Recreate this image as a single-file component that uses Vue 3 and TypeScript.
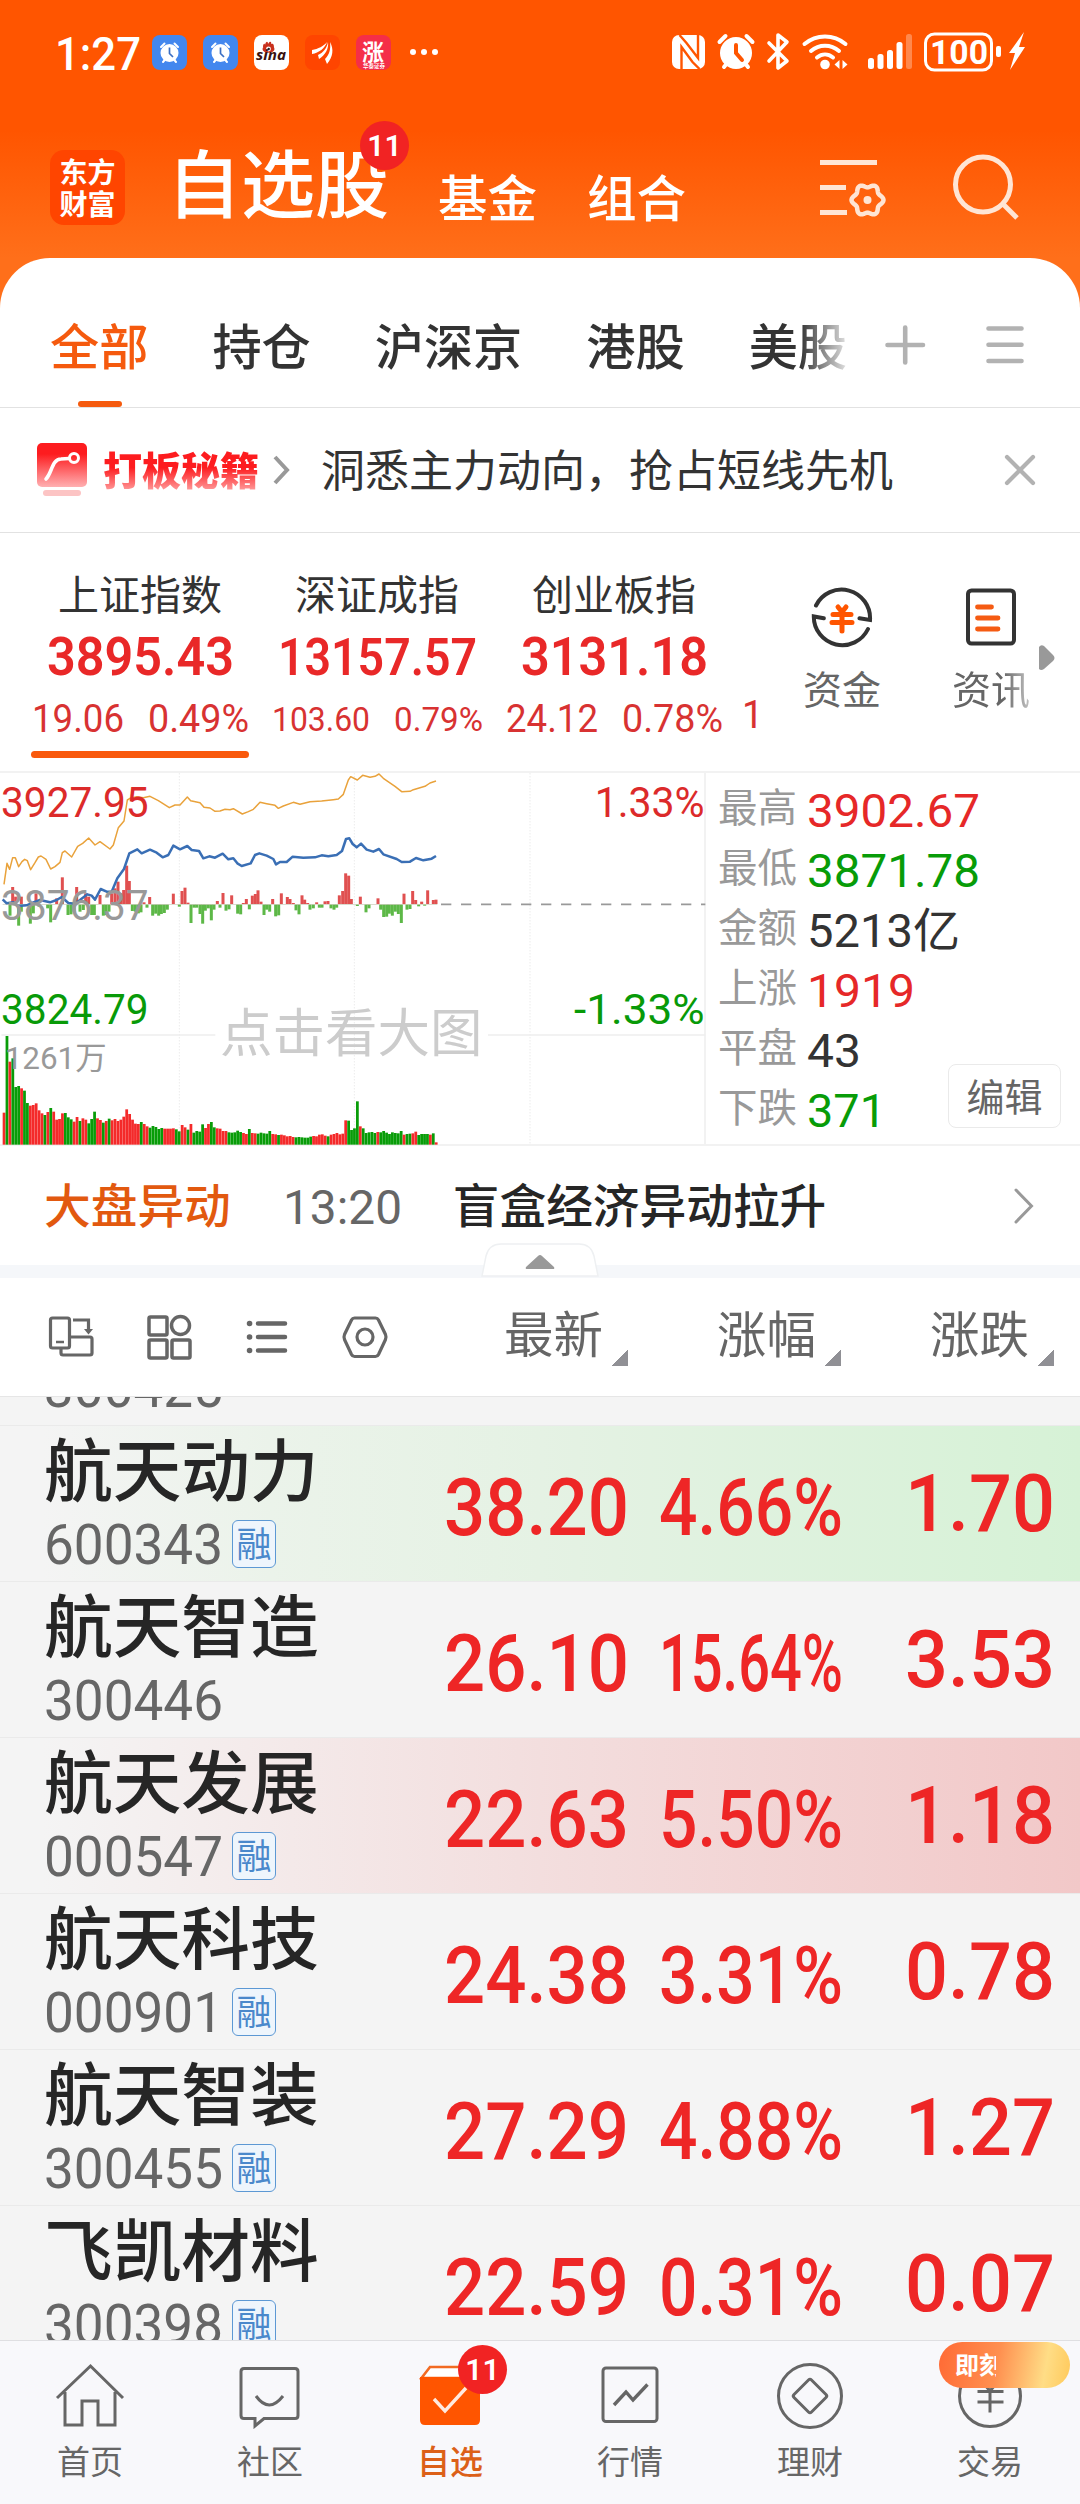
<script setup lang="ts">
type Tone = 'up' | 'down' | 'flat'

interface IndexQuote { name: string; value: string; change: string; pct: string; small?: boolean }
interface Stat { label: string; value: string; tone: Tone; width: number }
interface Stock { name: string; code: string; margin: boolean; price: string; pct: string; change: string; flash?: 'green' | 'red' }

// Sets figures in the numeric face and squeezes them to occupy exactly the given width.
const vFit = {
  mounted(el: HTMLElement, binding: { value: number }) {
    el.classList.add('fit')
    const natural = el.getBoundingClientRect().width
    if (!natural) return
    el.style.transformOrigin = 'left center'
    el.style.transform = `translateY(0.045em) scaleX(${binding.value / natural})`
    el.style.marginRight = `${binding.value - natural}px`
  },
}

const tabs = ['全部', '持仓', '沪深京', '港股', '美股']

const indexes: IndexQuote[] = [
  { name: '上证指数', value: '3895.43', change: '19.06', pct: '0.49%' },
  { name: '深证成指', value: '13157.57', change: '103.60', pct: '0.79%', small: true },
  { name: '创业板指', value: '3131.18', change: '24.12', pct: '0.78%' },
]

const stats: Stat[] = [
  { label: '最高', value: '3902.67', tone: 'up', width: 173 },
  { label: '最低', value: '3871.78', tone: 'down', width: 173 },
  { label: '金额', value: '5213亿', tone: 'flat', width: 153 },
  { label: '上涨', value: '1919', tone: 'up', width: 108 },
  { label: '平盘', value: '43', tone: 'flat', width: 54 },
  { label: '下跌', value: '371', tone: 'down', width: 79 },
]

const stocks: Stock[] = [
  { name: '航天动力', code: '600343', margin: true, price: '38.20', pct: '4.66%', change: '1.70', flash: 'green' },
  { name: '航天智造', code: '300446', margin: false, price: '26.10', pct: '15.64%', change: '3.53' },
  { name: '航天发展', code: '000547', margin: true, price: '22.63', pct: '5.50%', change: '1.18', flash: 'red' },
  { name: '航天科技', code: '000901', margin: true, price: '24.38', pct: '3.31%', change: '0.78' },
  { name: '航天智装', code: '300455', margin: true, price: '27.29', pct: '4.88%', change: '1.27' },
  { name: '飞凯材料', code: '300398', margin: true, price: '22.59', pct: '0.31%', change: '0.07' },
]

const columns = ['最新', '涨幅', '涨跌']

// Six-lobed gear outline.
const gear = Array.from({ length: 72 }, (_, i) => {
  const a = (i / 72) * Math.PI * 2
  const r = 14.3 + 1.7 * Math.cos(6 * a)
  return `${(867.5 + r * Math.cos(a)).toFixed(2)},${(200 + r * Math.sin(a)).toFixed(2)}`
}).join(' ')

// Chart geometry: three units per pixel.
const leadLine = '12,358 21,295 29,313 38,278 46,278 56,305 66,290 74,283 82,287 92,314 105,293 115,276 123,273 138,283 152,312 165,305 180,292 187,263 195,258 215,276 233,244 248,235 266,219 285,240 300,230 330,252 340,240 355,188 372,168 382,105 390,100 410,95 430,98 450,94 475,107 508,128 525,120 540,120 562,96 572,107 600,113 612,127 630,129 645,139 660,138 675,133 690,134 700,131 727,147 745,140 760,133 780,112 800,116 825,121 835,130 850,123 880,112 900,118 930,110 965,108 1000,104 1015,102 1030,88 1045,45 1052,35 1072,45 1088,31 1110,37 1125,34 1137,27 1150,40 1185,64 1205,80 1230,79 1240,74 1275,64 1290,54 1308,48'
const priceLine = '8,403 20,415 40,412 55,423 80,421 100,412 120,405 150,412 170,405 185,396 205,414 225,416 240,405 262,388 275,392 285,404 302,372 320,380 335,380 352,340 372,312 388,265 412,253 425,265 450,254 470,263 488,277 505,270 520,242 540,253 562,243 575,255 597,258 610,280 628,274 645,278 668,266 685,283 700,280 712,295 725,303 752,295 765,270 778,265 800,272 820,282 828,298 840,291 860,291 878,275 910,278 945,277 965,271 985,274 1010,270 1026,258 1038,222 1048,220 1058,237 1070,247 1083,236 1100,254 1120,260 1137,252 1150,268 1190,282 1205,291 1230,290 1248,279 1270,286 1295,281 1308,273'

const strengthUp: number[][] = [[38, 366], [47, 395], [64, 395], [108, 385], [170, 400], [187, 337], [230, 366], [257, 385], [266, 395], [300, 390], [335, 385], [345, 370], [354, 350], [362, 385], [371, 375], [380, 302], [388, 348], [432, 412], [449, 396], [520, 386], [546, 378], [555, 368], [564, 413], [652, 408], [669, 384], [695, 391], [730, 414], [739, 402], [757, 392], [766, 387], [774, 376], [783, 410], [818, 402], [844, 385], [862, 396], [870, 402], [880, 414], [906, 391], [914, 404], [923, 414], [950, 412], [975, 409], [984, 408], [1018, 391], [1028, 378], [1037, 325], [1046, 332], [1054, 402], [1081, 395], [1134, 400], [1212, 386], [1238, 378], [1247, 405], [1265, 410], [1283, 376], [1300, 405], [1308, 404]]
const strengthDown: number[][] = [[30, 452], [56, 482], [64, 440], [91, 476], [100, 445], [117, 425], [143, 430], [152, 472], [204, 450], [213, 448], [222, 440], [240, 440], [250, 435], [275, 450], [283, 450], [310, 452], [318, 450], [327, 440], [397, 438], [406, 440], [415, 445], [423, 442], [441, 428], [458, 452], [467, 446], [476, 452], [484, 447], [493, 444], [502, 434], [538, 425], [573, 474], [582, 428], [590, 428], [600, 447], [608, 476], [616, 437], [625, 430], [634, 466], [642, 434], [660, 428], [678, 437], [687, 433], [713, 446], [722, 448], [748, 433], [792, 450], [800, 434], [809, 440], [827, 454], [836, 451], [888, 436], [897, 448], [930, 434], [940, 430], [958, 428], [966, 428], [993, 430], [1002, 434], [1010, 428], [1072, 423], [1098, 442], [1107, 430], [1142, 434], [1151, 456], [1160, 455], [1168, 446], [1177, 452], [1186, 440], [1195, 447], [1204, 474], [1221, 434], [1230, 432], [1256, 424], [1274, 422]]

const volumeTops: number[] = [
  1043, 813, 890, 880, 966, 963, 970, 977, 1014, 1022, 1020, 1015, 1036, 1045, 1050, 1041, 1029, 1040, 1064, 1062,
  1045, 1044, 1057, 1063, 1070, 1056, 1068, 1060, 1064, 1075, 1062, 1040, 1060, 1065, 1073, 1068, 1061, 1066, 1062, 1068,
  1064, 1055, 1033, 1047, 1064, 1076, 1077, 1071, 1077, 1084, 1088, 1083, 1086, 1092, 1089, 1091, 1091, 1091, 1090, 1093,
  1099, 1080, 1087, 1094, 1077, 1103, 1098, 1100, 1078, 1089, 1077, 1071, 1087, 1090, 1091, 1098, 1098, 1102, 1103, 1102,
  1097, 1101, 1104, 1107, 1092, 1104, 1105, 1106, 1103, 1105, 1106, 1098, 1107, 1108, 1110, 1109, 1111, 1114, 1113, 1116,
  1117, 1116, 1117, 1118, 1118, 1115, 1113, 1114, 1109, 1108, 1112, 1114, 1109, 1107, 1104, 1108, 1106, 1066, 1067, 1095,
  1090, 1009, 1084, 1090, 1104, 1102, 1101, 1104, 1101, 1102, 1098, 1103, 1107, 1102, 1104, 1105, 1098, 1109, 1107, 1106,
  1105, 1100, 1110, 1107, 1107, 1107, 1109, 1105, 1132,
]
const volumeTones =
  'rgrgggrggrrrrrgrgrrrrgggrrgrrggg' + 'rrgrgrrrrrrrrrrgrrggggg' + 'rrrrggrrgrggggrrggrrrrgggggrrgrrg' + 'ggggrrgrrrrrggggggrrrrrgrrrr' + 'rrggggrgggggrggggggggrggrrggggrgrr'

const bottomBars = volumeTops.map((top, i) => ({ x: 8 + i * 8.76, top, tone: volumeTones[i] === 'g' ? 'green' : 'red' }))
</script>

<template>
  <div class="app">
    <header class="head">
      <div class="status">
        <span class="clock" v-fit="86">1:27</span>
        <div class="notif">
          <svg v-for="n in 2" :key="n" width="35" height="35" viewBox="0 0 35 35">
            <rect width="35" height="35" rx="8" fill="#4387ee" />
            <circle cx="17.5" cy="18" r="9" fill="#fff" />
            <path d="M9 12l3.5-3.5M26 12l-3.5-3.5M11 27l2.500-3M24 27l-2.500-3" stroke="#fff" stroke-width="2" stroke-linecap="round" />
            <path d="M17.500 12.500v6l3.500 3.500" stroke="#3b6fc4" stroke-width="1.700" fill="none" />
          </svg>
          <svg width="35" height="35" viewBox="0 0 35 35">
            <rect width="35" height="35" rx="8" fill="#fff" />
            <ellipse cx="14.500" cy="14" rx="6" ry="3.800" fill="#c9301c" />
            <path d="M9 12c0-4 2-4 2-2 1-4 3-4 3-1 2-4 4-2 3 0 3-1 3 2 3 4z" fill="#c9301c" />
            <circle cx="14.500" cy="14" r="2.400" fill="#fff" /><circle cx="14.700" cy="14" r="1.200" fill="#222" />
            <text x="2" y="25" textLength="30" lengthAdjust="spacingAndGlyphs" font-size="14" font-weight="700" font-style="italic" fill="#3a1210">sina</text>
          </svg>
          <svg width="35" height="35" viewBox="0 0 35 35">
            <rect width="35" height="35" rx="8" fill="#ff4500" />
            <path d="M7 15c6-1 12-4 15-8-2 6-8 11-15 12zM13 20c5-2 9-7 10-13 1 7-3 13-9 17zM20 24c4-4 6-9 5-17 4 7 3 15-3 22z" fill="#fff" />
          </svg>
          <svg width="35" height="35" viewBox="0 0 35 35">
            <rect width="35" height="35" rx="8" fill="#f52e48" />
            <text x="6" y="25" font-size="22" font-weight="700" fill="#fff">涨</text>
            <text x="7" y="33" font-size="5.500" font-weight="700" fill="#fff">华泰证券</text>
          </svg>
        </div>
        <span class="dots"><i></i><i></i><i></i></span>
        <svg class="sys" width="356" height="42" viewBox="670 31 356 42" fill="#fff">
          <rect x="672" y="35" width="33" height="34" rx="7" />
          <path d="M679.500 35l7 8 11.500 15V35M699.500 69l-7-7-11-15v22" stroke="#ff5500" stroke-width="2.400" fill="none" />
          <circle cx="736" cy="53" r="16" />
          <path d="M719.500 42l6-6M752.500 42l-6-6M724 67l4-5M748 67l-4-5" stroke="#fff" stroke-width="4" stroke-linecap="round" />
          <path d="M736 45v8l6 7" stroke="#ff5500" stroke-width="4" fill="none" stroke-linecap="round" />
          <path d="M769 43l18 18-9 7V35l9 7-18 19" fill="none" stroke="#fff" stroke-width="3.600" stroke-linejoin="round" stroke-linecap="round" />
          <g fill="none" stroke="#fff" stroke-width="4" stroke-linecap="round">
            <path d="M804.500 44c12-10 29-10 41 0M811 51c8-7 20-7 28 0M817 57.500c5-4 11-4 16 0" />
          </g>
          <circle cx="825" cy="64.500" r="4.800" />
          <path d="M839.500 60v9l-5-4.500zM842.500 60v9l5-4.500z" />
          <rect x="868" y="58" width="6" height="11" rx="2.500" /><rect x="877.500" y="54" width="6" height="15" rx="2.500" />
          <rect x="887" y="50" width="6" height="19" rx="2.500" /><rect x="896.500" y="42" width="6" height="27" rx="2.500" />
          <rect x="906" y="34" width="6" height="35" rx="2.500" opacity=".3" />
          <rect x="925.500" y="34" width="66" height="36" rx="9" fill="none" stroke="#fff" stroke-width="3" />
          <text class="fit" x="930" y="64" textLength="58" lengthAdjust="spacingAndGlyphs" font-size="34" font-weight="700">100</text>
          <rect x="996" y="46" width="5" height="11" rx="2" />
          <path d="M1024 32l-15 21h6l-5 17 15-23h-6z" />
        </svg>
      </div>
      <div class="nav">
        <div class="logo"><span>东方</span><span>财富</span></div>
        <span class="main-title">自选股<b class="badge"><span>11</span></b></span>
        <span class="sub first">基金</span>
        <span class="sub">组合</span>
        <svg class="tools" width="204" height="70" viewBox="818 152 204 70" fill="none" stroke="#ffe5d4" stroke-width="5">
          <path d="M820 162.500h57M820 187.500h26M820 212.500h27" />
          <polygon :points="gear" stroke-width="4.500" stroke-linejoin="round" />
          <circle cx="867.500" cy="200" r="4" fill="#ffe5d4" stroke="none" />
          <circle cx="983" cy="184.500" r="27.500" />
          <path d="M1003 204l14 14" />
        </svg>
      </div>
    </header>

    <main class="sheet">
      <div class="tabs">
        <div class="tab-list">
          <span v-for="(t, i) in tabs" :key="t" class="tab" :class="{ active: i === 0 }">{{ t }}</span>
        </div>
        <svg class="tab-tools" width="142" height="44" viewBox="884 323 142 44" fill="none" stroke="#b2b2b2" stroke-width="4.600" stroke-linecap="round">
          <path d="M887.500 345h35.500M905.200 327.500v35M988.500 328.500h33M988.500 344.800h33M988.500 361h33" />
        </svg>
      </div>

      <div class="promo">
        <svg width="50" height="54" viewBox="0 0 50 54">
          <defs>
            <linearGradient id="pg" x1="0" y1="0" x2="0" y2="1"><stop offset=".25" stop-color="#fd1c1f" /><stop offset="1" stop-color="#ffb0b2" /></linearGradient>
          </defs>
          <rect width="50" height="44" rx="5" fill="url(#pg)" />
          <rect x="6" y="47" width="38" height="6" rx="3" fill="#fcc4c4" />
          <path d="M9 36c6-6 6-20 15-20l8-.500" fill="none" stroke="#fff" stroke-width="3.600" stroke-linecap="round" />
          <circle cx="37" cy="15" r="4.500" fill="none" stroke="#fff" stroke-width="3" />
        </svg>
        <b class="promo-name">打板秘籍</b>
        <svg class="chev" width="17" height="30" viewBox="0 0 17 30" fill="none" stroke="#999" stroke-width="4"><path d="M2 2l12 13L2 28" /></svg>
        <span class="promo-text">洞悉主力动向，抢占短线先机</span>
        <svg class="close" width="32" height="32" viewBox="0 0 32 32" fill="none" stroke="#b2b2b2" stroke-width="4.200" stroke-linecap="round"><path d="M3 3l26 26M29 3L3 29" /></svg>
      </div>

      <div class="indexes">
        <div v-for="(q, i) in indexes" :key="q.name" class="index" :class="{ active: i === 0, small: q.small }">
          <span class="index-name">{{ q.name }}</span>
          <b class="index-value"><span v-fit="q.small ? 199 : 187">{{ q.value }}</span></b>
          <span class="index-delta">
            <span v-fit="q.small ? 98 : 92">{{ q.change }}</span>
            <span v-fit="q.small ? 89 : 101">{{ q.pct }}</span>
          </span>
        </div>
        <span class="next-index fit">1</span>
        <div class="entry">
          <svg width="62" height="62" viewBox="0 0 62 62" fill="none" stroke-linecap="round">
            <g stroke="#333" stroke-width="4">
              <path d="M5 19.500A28.500 28.500 0 0 1 59 34l-10.500-1.800" /><path d="M57 43A28.500 28.500 0 0 1 2.800 30.500l10 1.800" />
            </g>
            <path d="M27 21l4 5 4-5M22 28.500h18M21 36.500h20M31 28v17" stroke="#ff5500" stroke-width="5" />
          </svg>
          <span>资金</span>
        </div>
        <div class="entry news">
          <svg width="62" height="62" viewBox="0 0 62 62" fill="none" stroke-linecap="round">
            <rect x="8" y="4.500" width="46" height="53" rx="3.500" stroke="#333" stroke-width="4" />
            <path d="M17.500 21h14M17.500 32h20.500M17.500 43h20.500" stroke="#f55b12" stroke-width="4.800" />
          </svg>
          <span>资讯</span>
        </div>
        <svg class="more" width="16" height="26" viewBox="0 0 16 26"><path d="M0 2Q2-1 5 1l9 9q3 3 0 6l-9 8q-3 2-5 0z" fill="#999" /></svg>
      </div>

      <div class="market">
        <div class="chart">
          <svg width="706" height="375" viewBox="0 18 2118 1125">
            <g stroke="#e2e2e2" stroke-width="3" stroke-dasharray="3 6"><path d="M538 25V1137M1063 25V1137M1590 25V1137" /></g>
            <path d="M4 810H646M1464 810H2116" stroke="#eee" stroke-width="5" />
            <g fill="#e05050"><rect v-for="p in strengthUp" :key="p[0]" :x="p[0] - 4.500" :y="p[1]" width="9" :height="417 - p[1]" /></g>
            <g fill="#5db847"><rect v-for="p in strengthDown" :key="p[0]" :x="p[0] - 4.500" y="419" width="9" :height="p[1] - 419" /></g>
            <path d="M8 418H1312" stroke="#8a8a60" stroke-width="2" opacity=".55" />
            <path d="M1323 418H2116" stroke="#999" stroke-width="5" stroke-dasharray="31 29" />
            <polyline :points="leadLine" fill="none" stroke="#e9a23b" stroke-width="4.500" stroke-linejoin="round" />
            <polyline :points="priceLine" fill="none" stroke="#3a6fb5" stroke-width="7.500" stroke-linejoin="round" />
            <rect v-for="b in bottomBars" :key="b.x" :x="b.x" :y="b.top" width="8.300" :height="1139 - b.top" :fill="b.tone === 'green' ? '#089c08' : '#f42a2a'" />
            <g class="axis">
              <text x="3" y="157" textLength="443" lengthAdjust="spacingAndGlyphs" class="t-up">3927.95</text>
              <text x="3" y="466" textLength="443" lengthAdjust="spacingAndGlyphs" class="t-grey">3876.37</text>
              <text x="3" y="777" textLength="443" lengthAdjust="spacingAndGlyphs" class="t-down">3824.79</text>
              <text x="1784" y="157" textLength="330" lengthAdjust="spacingAndGlyphs" class="t-up">1.33%</text>
              <text x="1722" y="777" textLength="392" lengthAdjust="spacingAndGlyphs" class="t-down">-1.33%</text>
              <text x="14" y="912" textLength="306" lengthAdjust="spacingAndGlyphs" class="t-vol">1261万</text>
            </g>
          </svg>
          <span class="watermark">点击看大图</span>
        </div>
        <div class="stats">
          <div v-for="s in stats" :key="s.label" class="stat">
            <span class="stat-label">{{ s.label }}</span>
            <span class="stat-value" :class="s.tone" v-fit="s.width">{{ s.value }}</span>
          </div>
          <button class="edit" type="button">编辑</button>
        </div>
      </div>

      <div class="alert">
        <span class="alert-kind">大盘异动</span>
        <span class="alert-time" v-fit="119">13:20</span>
        <span class="alert-text">盲盒经济异动拉升</span>
        <svg width="20" height="36" viewBox="0 0 20 36" fill="none" stroke="#999" stroke-width="3" stroke-linecap="round"><path d="M2 2l15.500 16L2 34" /></svg>
      </div>
      <div class="divider">
        <svg class="fold" width="120" height="36" viewBox="0 0 120 36">
          <path d="M2 34L6 14Q9 2 21 2H99Q111 2 114 14L118 34z" fill="#fff" stroke="#eef0f2" stroke-width="1.500" />
          <path d="M46 25L58 14q2-2 4 0l12 11q1 2-1 2H47q-2 0-1-2z" fill="#999" />
        </svg>
      </div>

      <div class="toolbar">
        <svg width="342" height="46" viewBox="47 1314 342 46" fill="none" stroke="#666" stroke-width="3.200">
          <rect x="50.500" y="1318" width="19" height="30" rx="2" /><path d="M56 1342h8" stroke-width="2.500" />
          <path d="M61 1349v4q0 2 2 2h27q2 0 2-2v-14q0-2-2-2H70M73 1320h15.500v12" /><path d="M84 1329l4.500 5.500 4.500-5.500z" fill="#666" stroke="none" />
          <g stroke-width="3.500"><rect x="149" y="1317" width="18" height="18" rx="1.500" /><circle cx="180.500" cy="1325.500" r="9" /><rect x="149" y="1340" width="18" height="18" rx="1.500" /><rect x="172" y="1340" width="18" height="18" rx="1.500" /></g>
          <path d="M258 1323.500h27M258 1337h27M258 1350.500h27" stroke-width="4.500" stroke-linecap="round" />
          <path d="M249.500 1323.500h.100M249.500 1337h.100M249.500 1350.500h.100" stroke-width="5.500" stroke-linecap="round" />
          <path d="M354.500 1318h21q2 0 3 2l7 14.500q1 2.500 0 5l-7 15q-1 2-3 2h-21q-2 0-3-2l-7-15q-1-2.500 0-5l7-14.500q1-2 3-2z" /><circle cx="365" cy="1337" r="8" />
        </svg>
        <span v-for="c in columns" :key="c" class="col-head">{{ c }}<i></i></span>
      </div>

      <div class="list">
        <div class="stock partial"><span class="code"><span v-fit="179">300425</span></span></div>
        <div v-for="s in stocks" :key="s.code" class="stock" :class="s.flash">
          <div class="who">
            <span class="stock-name">{{ s.name }}</span>
            <span class="code"><span v-fit="179">{{ s.code }}</span><em v-if="s.margin">融</em></span>
          </div>
          <span class="num price"><span v-fit="185">{{ s.price }}</span></span>
          <span class="num pct"><span v-fit="184">{{ s.pct }}</span></span>
          <span class="num diff"><span v-fit="150">{{ s.change }}</span></span>
        </div>
      </div>
    </main>

    <nav class="bottom">
      <div class="item">
        <svg width="72" height="66" viewBox="54 2364 72 66" class="ic"><path d="M57 2399l33.500-32 32.500 32M65 2393v33h17v-24h16v24h17v-33" /></svg>
        <span>首页</span>
      </div>
      <div class="item">
        <svg width="72" height="66" viewBox="234 2364 72 66" class="ic"><path d="M244 2369.500h51q3 0 3 3v44q0 3-3 3h-31l-9 7.500v-7.500h-11q-3 0-3-3v-44q0-3 3-3zM256 2397q13 18 27 0" /></svg>
        <span>社区</span>
      </div>
      <div class="item on">
        <svg width="72" height="66" viewBox="414 2364 72 66"><path d="M421.500 2379l8.500-11h42l7 11z" fill="#fff" stroke="#f26a22" stroke-width="2.600" /><path d="M420 2378h60v43q0 5-5 5h-50q-5 0-5-5z" fill="#ff5500" /><path d="M434 2400l11 12 21-23" fill="none" stroke="#ffeadf" stroke-width="3.400" /></svg>
        <b class="badge"><span>11</span></b>
        <span>自选</span>
      </div>
      <div class="item">
        <svg width="72" height="66" viewBox="594 2364 72 66" class="ic"><rect x="603" y="2369" width="54" height="53.500" rx="3" /><path d="M614 2406l12-13 7 8 14.500-15.500" stroke-width="3.400" /></svg>
        <span>行情</span>
      </div>
      <div class="item">
        <svg width="72" height="66" viewBox="774 2364 72 66" class="ic"><circle cx="810" cy="2397" r="31.500" /><path d="M808.500 2381q1.500-1.500 3 0l14.500 14.500q1.500 1.500 0 3L811.500 2413q-1.500 1.500-3 0L794 2398.500q-1.500-1.500 0-3z" /></svg>
        <span>理财</span>
      </div>
      <div class="item">
        <svg width="72" height="66" viewBox="953.500 2364 72 66" class="ic"><circle cx="989.500" cy="2397" r="30.500" /><path d="M983 2384l6.500 8 6.500-8M977 2392.500h26M977 2403h26M989.500 2392v21.500" /></svg>
        <span class="promo-pill"><span>即刻</span></span>
        <span>交易</span>
      </div>
    </nav>
  </div>
</template>

<style>
body { margin: 0; background: #f4f4f4; }
</style>

<style scoped>
.app {
  width: 1080px; height: 2504px; display: flex; flex-direction: column; overflow: hidden;
  font-family: "Noto Sans", "Noto Sans CJK SC", sans-serif; color: #333; line-height: 1; white-space: nowrap;
  background: #ff6f1a;
}
.fit { font-family: Roboto, "Noto Sans CJK SC", sans-serif; }
svg { display: block; flex: none; }
span, b { flex: none; }
.head { height: 258px; flex: none; background: linear-gradient(#ff5500 130px, #ff6f1a 258px); color: #fff; }
.status { height: 104px; display: flex; align-items: center; padding: 0 54px 0 55px; box-sizing: border-box; }
.clock { font-size: 46px; font-weight: 500; display: inline-block; }
.notif { display: flex; gap: 16px; margin-left: 11px; }
.dots { display: flex; gap: 5px; margin-left: 19px; }
.dots i { width: 6px; height: 6px; border-radius: 50%; background: #fff; }
.sys { margin-left: auto; }
.nav { height: 154px; display: flex; align-items: flex-start; padding-left: 50px; }
.logo {
  width: 75px; height: 75px; margin-top: 46px; border-radius: 14px; background: #ff4500; box-sizing: border-box;
  display: flex; flex-direction: column; align-items: center; justify-content: center; gap: 4px; font-size: 28px; font-weight: 700;
}
.main-title { position: relative; font-size: 74px; font-weight: 500; margin: 43px 0 0 42px; }
.badge {
  position: absolute; width: 49px; height: 49px; border-radius: 50%; background: #f12323; color: #fff;
  display: flex; align-items: center; justify-content: center; font: 600 30px/1 Roboto, sans-serif;
}
.main-title .badge { left: 193px; top: -26px; }
.sub { font-size: 49.500px; margin-top: 70px; font-weight: 450; margin-left: 50px; }
.sub.first { margin-left: 49px; }
.tools { margin: 48px 58px 0 auto; }

.sheet { flex: 1; min-height: 0; background: #fff; border-radius: 50px 50px 0 0; display: flex; flex-direction: column; overflow: hidden; }
.tabs { height: 150px; flex: none; border-bottom: 1px solid #e2e2e2; box-sizing: border-box; display: flex; align-items: stretch; padding-left: 50px; }
.tab-list { display: flex; gap: 64px; width: 801px; overflow: hidden; -webkit-mask-image: linear-gradient(90deg, #000 750px, transparent 805px); mask-image: linear-gradient(90deg, #000 750px, transparent 805px); }
.tab { font-size: 49.200px; line-height: 175px; height: 149px; position: relative; font-weight: 450; }
.tab.active { color: #f55a0e; }
.tab.active::after { content: ""; position: absolute; left: 28px; bottom: 0; width: 44px; height: 6px; border-radius: 3px; background: #f55a0e; }
.tab-tools { margin: 65px 0 0 33px; }
.promo { height: 125px; flex: none; border-bottom: 1px solid #e2e2e2; box-sizing: border-box; display: flex; align-items: center; padding-left: 37px; }
.promo-name { font-size: 39px; font-weight: 900; margin-left: 16px; line-height: 48px; background: linear-gradient(#fd1c1f 45%, #ffa0a0 95%); -webkit-background-clip: text; background-clip: text; color: transparent; }
.chev { margin-left: 14px; }
.promo-text { font-size: 44px; margin-left: 31px; }
.close { margin-left: 111px; }

.indexes { height: 238px; flex: none; display: flex; padding-left: 31px; box-sizing: border-box; }
.index { width: 218px; margin-right: 19px; display: flex; flex-direction: column; align-items: center; position: relative; color: #e92828; }
.index-name { color: #333; font-size: 41px; margin-top: 41px; }
.index-value { font-size: 53.500px; height: 53px; margin-top: 13px; font-weight: 600; display: flex; }
.index-delta { font-size: 38px; height: 37px; display: flex; align-items: center; justify-content: center; gap: 24px; margin-top: 17px; color: #d83232; }
.index.small .index-value { font-size: 51px; padding-top: 2px; height: 51px; }
.index.small .index-delta { font-size: 34px; gap: 24px; }
.index.active::after { content: ""; position: absolute; left: 0; right: 0; bottom: 13px; height: 7px; border-radius: 4px; background: #f9590c; }
.next-index { width: 18px; margin: 163px 0 0 0; font-size: 38px; color: #d83232; }
.entry { display: flex; flex-direction: column; align-items: center; width: 80px; margin-left: 42px; color: #666; font-size: 39px; }
.entry svg { margin-top: 53px; }
.entry > span { margin-top: 21px; }
.entry.news { margin-left: 69px; }
.entry.news > span { -webkit-mask-image: linear-gradient(90deg, #000 65%, rgba(0,0,0,.4)); mask-image: linear-gradient(90deg, #000 65%, rgba(0,0,0,.4)); }
.more { margin: 112px 0 0 8px; }

.market { height: 375px; flex: none; display: flex; box-shadow: inset 0 2px #f2f2f2, inset 0 -2px #f2f2f2; }
.chart { width: 706px; height: 375px; position: relative; border-right: 2px solid #f2f2f2; box-sizing: border-box; }
.axis text { font-family: Roboto, "Noto Sans CJK SC", sans-serif; font-size: 127px; }
.t-up { fill: #dc2a2a; }
.t-down { fill: #089a08; }
.t-grey { fill: #999; }
.axis .t-vol { fill: #999; font-size: 95px; }
.watermark { position: absolute; left: 220px; top: 235px; font-size: 52.500px; color: #ccc; }
.stats { flex: 1; position: relative; padding: 7px 0 0 12px; }
.stat { height: 60px; display: flex; align-items: center; }
.stat-label { font-size: 39.500px; color: #999; }
.stat-value { font-size: 47px; margin-left: 10px; font-weight: 450; }
.up { color: #e62828; }
.down { color: #089c08; }
.flat { color: #333; font-weight: 400; }
.edit { position: absolute; right: 19px; top: 293px; width: 113px; height: 64px; border: 1.500px solid #eaeaea; border-radius: 8px; background: #fff; font: 38px/1 "Noto Sans", "Noto Sans CJK SC", sans-serif; color: #666; padding: 0; }

.alert { height: 119px; flex: none; display: flex; align-items: center; padding-left: 44px; font-size: 46.700px; }
.alert-kind { color: #e2590f; font-weight: 450; }
.alert-time { color: #666; margin-left: 52px; font-size: 48px; }
.alert-text { color: #262626; font-weight: 450; margin-left: 51px; }
.alert svg { margin-left: 188px; }
.divider { height: 13px; flex: none; background: #f5f7fa; position: relative; }
.fold { position: absolute; left: 480px; top: -23px; }
.toolbar { height: 119px; flex: none; display: flex; align-items: center; border-bottom: 1px solid #e6e6e6; box-sizing: border-box; padding-left: 47px; color: #666; font-size: 49.500px; }
.toolbar > svg { margin-bottom: 1px; }
.col-head { display: flex; width: 124px; margin-left: 89px; margin-bottom: 4px; position: relative; }
.toolbar svg + .col-head { margin-left: 115px; }
.col-head i { position: absolute; right: 0; bottom: -6px; width: 16px; height: 16px; background: linear-gradient(135deg, transparent 50%, #909095 50%); }

.list { flex: 1; min-height: 0; overflow: hidden; background: #f4f4f4; }
.stock { height: 156px; box-sizing: border-box; border-bottom: 1.500px solid #eaeaea; display: flex; padding-left: 44px; position: relative; }
.stock.partial { height: 29px; align-items: flex-end; overflow: hidden; }
.stock.partial .code { margin: 0 0 12px; }
.stock.green { background: linear-gradient(90deg, #f4f4f4 4%, #ebf3ea 25%, #e5f2e4 50%, #d6f2d6); }
.stock.red { background: linear-gradient(90deg, #f4f4f4 4%, #f4eaea 25%, #f3dede 50%, #f2c8c8); }
.who { width: 400px; }
.stock-name { display: block; font-size: 68.700px; color: #262626; font-weight: 450; margin-top: 10px; }
.code { display: flex; align-items: center; font-size: 55px; height: 54px; color: #666; margin-top: 12px; }
.code em { font-style: normal; font-size: 35px; color: #4a88cb; width: 44px; height: 48px; line-height: 45px; text-align: center; box-sizing: border-box; border: 1.500px solid #5c98d4; border-radius: 6px; background: #eef5fc; margin-left: 9px; }
.num { font-size: 80px; height: 80px; color: #ee2626; font-weight: 500; display: flex; justify-content: flex-end; margin-top: 38px; }
.price { width: 185px; }
.pct { width: 214px; }
.diff { width: 212px; margin-top: 34px; }

.bottom { height: 164px; flex: none; background: #f8f8fb; border-top: 1.500px solid #dfdfe2; box-sizing: border-box; display: flex; }
.item { width: 180px; position: relative; display: flex; flex-direction: column; align-items: center; color: #666; font-size: 33px; }
.item > svg { margin-top: 22px; }
.item > span:last-child { margin-top: 16px; }
.ic { fill: none; stroke: #666; stroke-width: 3; }
.item.on { color: #dc6018; font-weight: 450; }
.item .badge { left: 98px; top: 4px; }
.promo-pill { position: absolute; left: 39px; top: 1px; width: 131px; height: 46px; border-radius: 23px; background: linear-gradient(100deg, #ff6a35, #ff9050 45%, #ffdd86 80%, #ffc95a); color: #fff; font-size: 24px; font-weight: 700; display: flex; align-items: center; }
.promo-pill span { margin-left: 16px; width: 41px; overflow: hidden; line-height: 30px; }
</style>
